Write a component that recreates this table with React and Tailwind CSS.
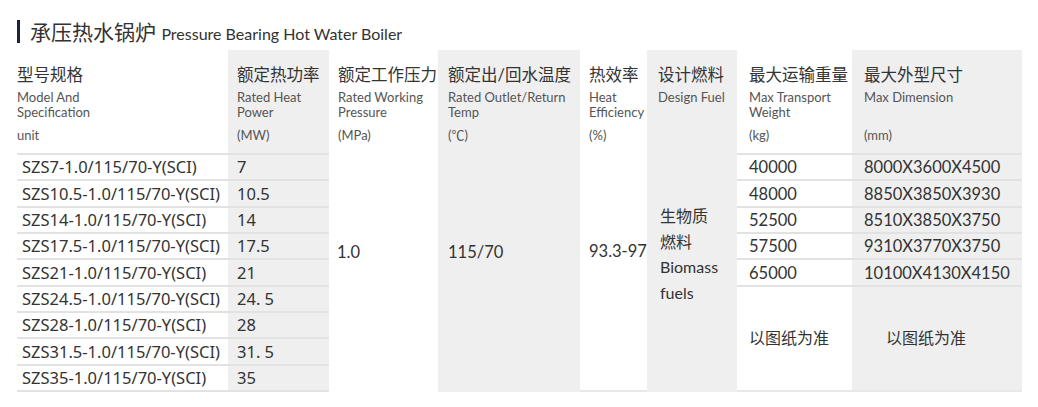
import React from 'react';

const models = [
  ['SZS7-1.0/115/70-Y(SCI)', '7'],
  ['SZS10.5-1.0/115/70-Y(SCI)', '10.5'],
  ['SZS14-1.0/115/70-Y(SCI)', '14'],
  ['SZS17.5-1.0/115/70-Y(SCI)', '17.5'],
  ['SZS21-1.0/115/70-Y(SCI)', '21'],
  ['SZS24.5-1.0/115/70-Y(SCI)', '24. 5'],
  ['SZS28-1.0/115/70-Y(SCI)', '28'],
  ['SZS31.5-1.0/115/70-Y(SCI)', '31. 5'],
  ['SZS35-1.0/115/70-Y(SCI)', '35'],
];

const sizes = [
  ['40000', '8000X3600X4500'],
  ['48000', '8850X3850X3930'],
  ['52500', '8510X3850X3750'],
  ['57500', '9310X3770X3750'],
  ['65000', '10100X4130X4150'],
];

const Head = ({ zh, en, unit, className = '' }) => (
  <div className={`pt-[14px] ${className}`}>
    <div className="text-[16.5px] leading-[22px] text-[#333] whitespace-nowrap">{zh}</div>
    <div className="mt-[4px] text-[13px] leading-[15px] text-[#555] h-[30px] whitespace-nowrap">{en}</div>
    <div className="mt-[8px] text-[13px] leading-[15px] text-[#555]">{unit}</div>
  </div>
);

const App = () => {
  return (
    <div className="w-[1038px] h-[407px] bg-white font-['Lato','Noto_Sans_CJK_SC',sans-serif] text-[#333]">
      {/* title */}
      <div className="flex items-start pt-[20px] pl-[17px] h-[50px]">
        <div className="w-[3px] h-[23px] bg-[#1d2140]" />
        <h2 className="ml-[10px] text-[21px] leading-[23px] text-[#333] whitespace-nowrap">
          承压热水锅炉 <span className="text-[16px]">Pressure Bearing Hot Water Boiler</span>
        </h2>
      </div>

      {/* spec table */}
      <div className="ml-[17px] w-[1005px] grid grid-cols-[211px_101px_109px_142px_67px_90px_115px_170px] grid-rows-[105px_repeat(9,26.33px)]">
        <Head className="border-b-2 border-[#e2e2e2]" zh="型号规格" en={<>Model And<br />Specification</>} unit="unit" />
        <Head className="pl-[9px] bg-[#efefef] border-b-2 border-[#e2e2e2]" zh="额定热功率" en={<>Rated Heat<br />Power</>} unit="(MW)" />
        <Head className="pl-[9px]" zh="额定工作压力" en={<>Rated Working<br />Pressure</>} unit="(MPa)" />
        <Head className="pl-[10px] bg-[#efefef]" zh="额定出/回水温度" en={<>Rated Outlet/Return<br />Temp</>} unit="(℃)" />
        <Head className="pl-[9px]" zh="热效率" en={<>Heat<br />Efficiency</>} unit="(%)" />
        <Head className="pl-[11px] bg-[#efefef]" zh="设计燃料" en="Design Fuel" unit="" />
        <Head className="pl-[12px] border-b-2 border-[#e2e2e2]" zh="最大运输重量" en={<>Max Transport<br />Weight</>} unit="(kg)" />
        <Head className="pl-[12px] bg-[#efefef] border-b-2 border-[#e2e2e2]" zh="最大外型尺寸" en="Max Dimension" unit="(mm)" />

        {models.map(([m, p], i) => (
          <React.Fragment key={m}>
            <div
              className="col-start-1 flex items-center pl-[5px] pt-[1px] border-b-2 border-[#e2e2e2] text-[16.5px] whitespace-pre font-['Noto_Sans','Noto_Sans_CJK_SC',sans-serif]"
              style={{ gridRowStart: i + 2 }}
            >
              {m}
            </div>
            <div
              className="col-start-2 flex items-center pl-[9px] pt-[1px] bg-[#efefef] border-b-2 border-[#e2e2e2] text-[16.5px] whitespace-pre font-['Noto_Sans','Noto_Sans_CJK_SC',sans-serif]"
              style={{ gridRowStart: i + 2 }}
            >
              {p}
            </div>
          </React.Fragment>
        ))}

        <div className="col-start-3 row-start-2 row-span-9 flex items-center pl-[8px] pb-[42px] text-[16.5px]">1.0</div>
        <div className="col-start-4 row-start-2 row-span-9 flex items-center pl-[10px] pb-[42px] bg-[#efefef] text-[16.5px]">115/70</div>
        <div className="col-start-5 row-start-2 row-span-9 flex items-center pl-[9px] pb-[42px] border-b-2 border-[#e8e8e8] text-[16.5px] whitespace-nowrap">93.3-97</div>
        <div className="col-start-6 row-start-2 row-span-9 flex items-center pl-[13px] pb-[38px] bg-[#efefef] text-[16px] leading-[25.5px]">
          <div>
            生物质<br />燃料<br />Biomass<br />fuels
          </div>
        </div>

        {sizes.map(([w, d], i) => (
          <React.Fragment key={d}>
            <div className="col-start-7 flex items-center pl-[12px] pt-[1px] border-b-2 border-[#e2e2e2] text-[16.5px]" style={{ gridRowStart: i + 2 }}>
              {w}
            </div>
            <div className="col-start-8 flex items-center pl-[12px] pt-[1px] bg-[#efefef] border-b-2 border-[#e2e2e2] text-[16.5px]" style={{ gridRowStart: i + 2 }}>
              {d}
            </div>
          </React.Fragment>
        ))}
        <div className="col-start-7 row-start-7 row-span-4 flex items-center pl-[12px] border-b-2 border-[#e8e8e8] text-[16px]">以图纸为准</div>
        <div className="col-start-8 row-start-7 row-span-4 flex items-center pl-[34px] bg-[#efefef] border-b-2 border-[#e8e8e8] text-[16px]">以图纸为准</div>
      </div>
    </div>
  );
};

export default App;
